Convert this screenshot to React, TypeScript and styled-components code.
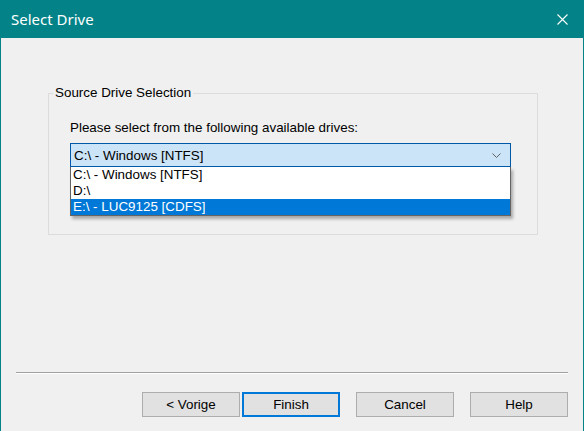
import React, { useState } from 'react'
import styled, { createGlobalStyle } from 'styled-components'

const GlobalStyle = createGlobalStyle`
  html, body {
    margin: 0;
    padding: 0;
    background: #f0f0f0;
  }
  body {
    font-family: "Liberation Sans", Arial, sans-serif;
    font-size: 13.4px;
    color: #000;
  }
`

const drives = [
  'C:\\ - Windows [NTFS]',
  'D:\\',
  'E:\\ - LUC9125 [CDFS]',
]

const Window = styled.div`
  width: 584px;
  height: 431px;
  box-sizing: border-box;
  border-left: 1px solid #038387;
  border-right: 1px solid #038387;
  display: flex;
  flex-direction: column;
  background: #f0f0f0;
  overflow: hidden;
`

const TitleBar = styled.div`
  height: 38px;
  flex: none;
  background: #038387;
  color: #fff;
  display: flex;
  align-items: center;
  justify-content: space-between;
  padding: 0 14px 0 10px;
  font-family: "Noto Sans", "Open Sans", sans-serif;
  font-size: 15px;
`

const CloseButton = styled.button`
  border: 0;
  background: transparent;
  padding: 0;
  width: 14px;
  height: 14px;
  display: flex;
  align-items: center;
  justify-content: center;
`

const Body = styled.div`
  flex: 1;
  padding: 47px 45px 0 47px;
`

const Group = styled.fieldset`
  margin: 0;
  padding: 19px 26px 16px 21px;
  border: 1px solid #dcdcdc;
  height: 150px;
  box-sizing: border-box;
`

const Legend = styled.legend`
  padding: 0 2px;
  margin-left: -17px;
  line-height: 16px;
`

const Label = styled.div`
  line-height: 16px;
  margin-bottom: 7px;
`

const Combo = styled.div`
  position: relative;
`

const ComboBox = styled.div`
  height: 24px;
  box-sizing: border-box;
  border: 1px solid #0058a8;
  background: #cce4f7;
  display: flex;
  align-items: center;
  justify-content: space-between;
  padding: 0 9px 0 3px;
`

const DropList = styled.ul`
  position: absolute;
  left: 0;
  right: 0;
  top: 24px;
  margin: 0;
  padding: 0;
  list-style: none;
  background: #fff;
  border: 1px solid #646464;
  border-top: 0;
  box-shadow: 2px 3px 3px rgba(0, 0, 0, 0.3);
`

const Item = styled.li<{ $selected?: boolean }>`
  height: 16px;
  line-height: 16px;
  padding-left: 2px;
  background: ${(p) => (p.$selected ? '#0078d7' : '#fff')};
  color: ${(p) => (p.$selected ? '#fff' : '#000')};
`

const Footer = styled.div`
  flex: none;
  padding: 0 15px 14px 15px;
`

const Separator = styled.div`
  height: 1px;
  background: #a0a0a0;
  border-bottom: 1px solid #fff;
  margin-bottom: 18px;
`

const ButtonRow = styled.div`
  display: flex;
  justify-content: flex-end;
  gap: 16px;
`

const ButtonPair = styled.div`
  display: flex;
  gap: 2px;
`

const Button = styled.button<{ $primary?: boolean }>`
  width: 98px;
  height: 25px;
  box-sizing: border-box;
  background: #e1e1e1;
  border: ${(p) => (p.$primary ? '2px solid #0078d7' : '1px solid #adadad')};
  font-family: "Liberation Sans", Arial, sans-serif;
  font-size: 13.4px;
  color: #000;
  padding: 0;
`

export default function App() {
  const [selected, setSelected] = useState(2)
  return (
    <>
      <GlobalStyle />
      <Window>
        <TitleBar>
          <span>Select Drive</span>
          <CloseButton aria-label="Close">
            <svg width="11" height="11" viewBox="0 0 11 11">
              <path d="M0.5 0.5 L10.5 10.5 M10.5 0.5 L0.5 10.5" stroke="#fff" strokeWidth="1.1" />
            </svg>
          </CloseButton>
        </TitleBar>
        <Body>
          <Group>
            <Legend>Source Drive Selection</Legend>
            <Label>Please select from the following available drives:</Label>
            <Combo>
              <ComboBox>
                <span>{drives[0]}</span>
                <svg width="9" height="5" viewBox="0 0 9 5">
                  <path d="M0.5 0.5 L4.5 4.5 L8.5 0.5" stroke="#606060" strokeWidth="1" fill="none" />
                </svg>
              </ComboBox>
              <DropList>
                {drives.map((d, i) => (
                  <Item key={d} $selected={i === selected} onClick={() => setSelected(i)}>
                    {d}
                  </Item>
                ))}
              </DropList>
            </Combo>
          </Group>
        </Body>
        <Footer>
          <Separator />
          <ButtonRow>
            <ButtonPair>
              <Button>&lt; Vorige</Button>
              <Button $primary>Finish</Button>
            </ButtonPair>
            <Button>Cancel</Button>
            <Button>Help</Button>
          </ButtonRow>
        </Footer>
      </Window>
    </>
  )
}
